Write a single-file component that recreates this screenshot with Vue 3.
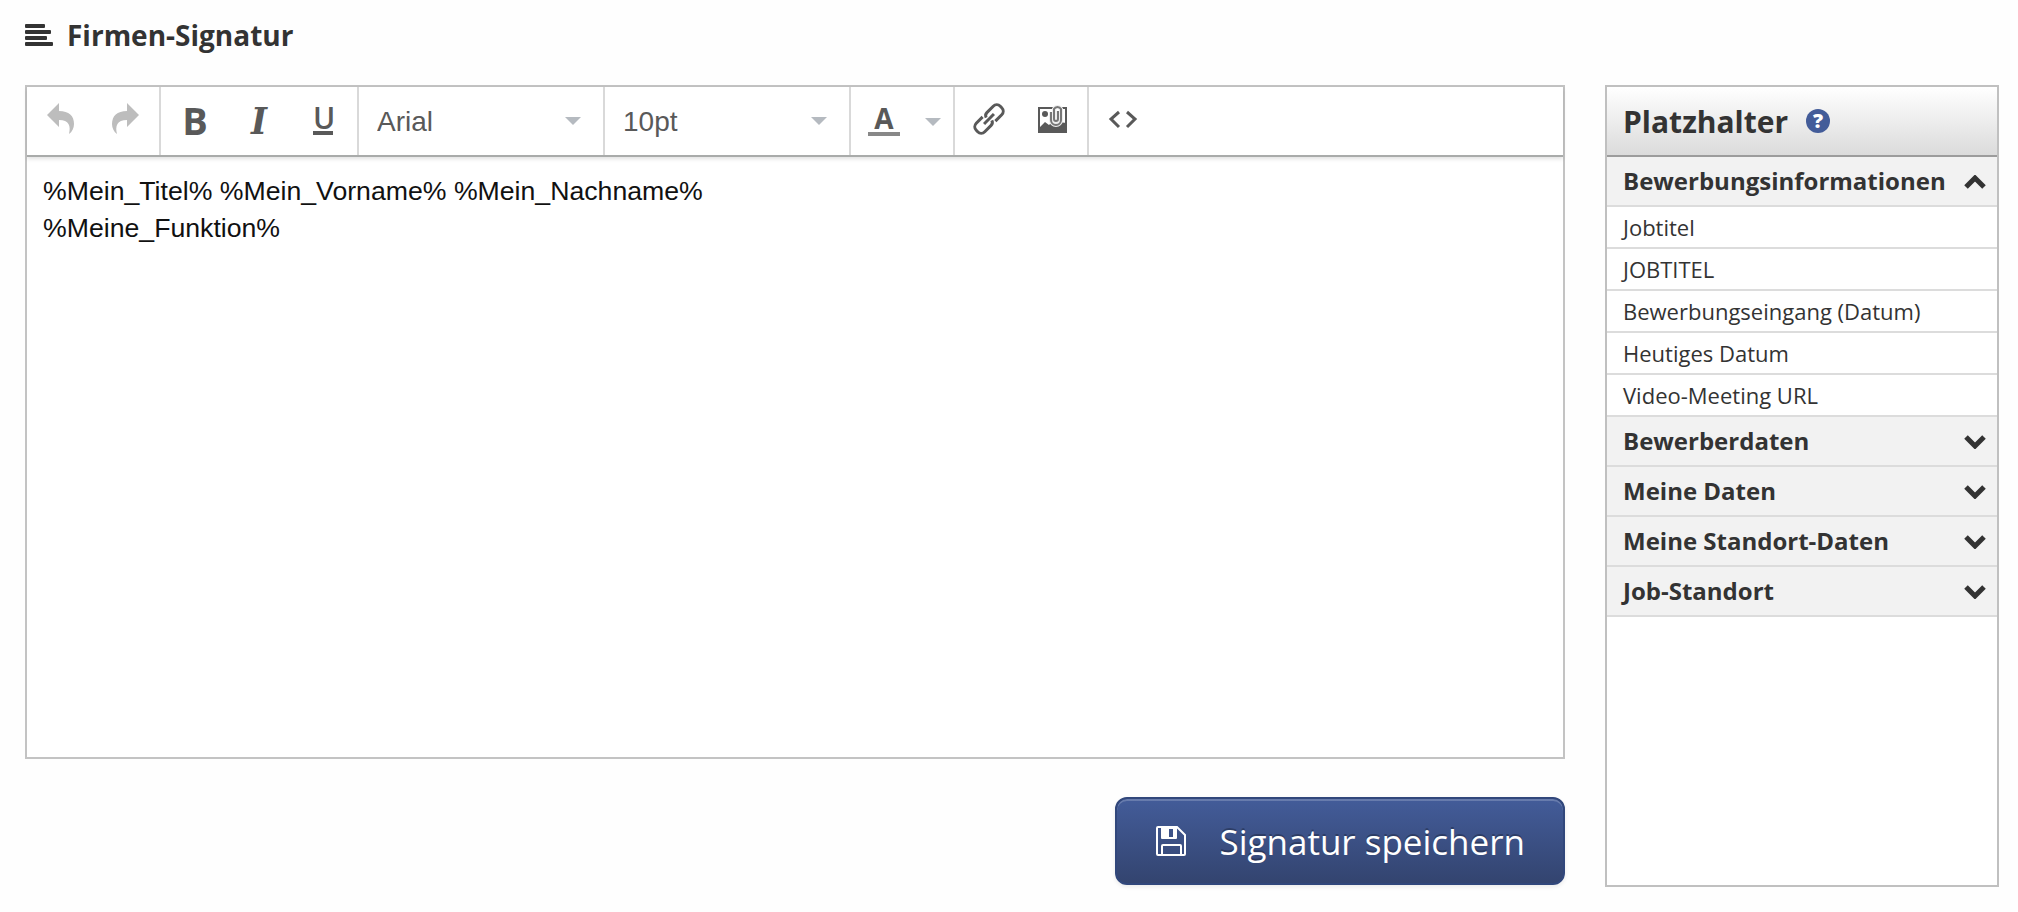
<template>
  <main class="page">
    <h1 class="page-title">
      <svg class="title-icon" viewBox="0 0 28 22" aria-hidden="true">
        <rect x="0" y="0" width="20" height="4" rx="1" />
        <rect x="0" y="6" width="26" height="4" rx="1" />
        <rect x="0" y="12" width="22" height="4" rx="1" />
        <rect x="0" y="18" width="28" height="4" rx="1" />
      </svg>
      <span>Firmen-Signatur</span>
    </h1>

    <div class="content">
      <form class="main" @submit.prevent>
        <div class="editor">
          <div class="toolbar" role="toolbar" aria-label="Formatierung">
            <div class="group">
              <button type="button" class="tool" disabled aria-label="Rückgängig">
                <svg class="icon" viewBox="0 0 36 36">
                  <path d="M4 13 16 1v8c10 0 15 5 15 13 0 4-2 8-5 10 2-8 0-14-10-14v7z" />
                </svg>
              </button>
              <button type="button" class="tool" disabled aria-label="Wiederholen">
                <svg class="icon" viewBox="0 0 36 36">
                  <path d="M32 13 20 1v8C10 9 5 14 5 22c0 4 2 8 5 10-2-8 0-14 10-14v7z" />
                </svg>
              </button>
            </div>
            <div class="group">
              <button type="button" class="tool bold" aria-label="Fett">B</button>
              <button type="button" class="tool italic" aria-label="Kursiv">I</button>
              <button type="button" class="tool underline" aria-label="Unterstrichen">
                <span>U</span>
              </button>
            </div>
            <div class="group select-group">
              <select v-model="font" aria-label="Schriftart">
                <option v-for="f in fonts" :key="f">{{ f }}</option>
              </select>
              <svg class="caret" viewBox="0 0 16 8"><path d="M0 0h16L8 8z" /></svg>
            </div>
            <div class="group select-group">
              <select v-model="size" aria-label="Schriftgröße">
                <option v-for="s in sizes" :key="s">{{ s }}</option>
              </select>
              <svg class="caret" viewBox="0 0 16 8"><path d="M0 0h16L8 8z" /></svg>
            </div>
            <div class="group">
              <button type="button" class="tool color" aria-label="Textfarbe">
                <span>A</span>
              </button>
              <button type="button" class="color-open" aria-label="Textfarbe wählen">
                <svg class="caret" viewBox="0 0 16 8"><path d="M0 0h16L8 8z" /></svg>
              </button>
            </div>
            <div class="group">
              <button type="button" class="tool" aria-label="Link einfügen">
                <svg class="icon line" viewBox="0 0 36 36">
                  <g transform="translate(18 17) rotate(-45)">
                    <path d="M-3-6h-9a5 5 0 0 0-5 5v2a5 5 0 0 0 5 5h9q3 0 4-3" />
                    <path d="M3 6h9a5 5 0 0 0 5-5v-2a5 5 0 0 0-5-5H3q-3 0-4 3" />
                    <path d="M-7 0H7" />
                  </g>
                </svg>
              </button>
              <button type="button" class="tool" aria-label="Bild einfügen">
                <svg class="icon" viewBox="0 0 36 36">
                  <rect class="photo-frame" x="4" y="6" width="27" height="24" />
                  <circle cx="10" cy="12" r="3" />
                  <path d="M4 30v-4l6-6 4 3 4-4 13 2v9z" />
                  <path class="clip-edge" d="M16 10v8a5 5 0 0 0 10 0V7a4 4 0 0 0-7 0v10a2 2 0 0 0 4 0V9" />
                  <path class="clip" d="M16 10v8a5 5 0 0 0 10 0V7a4 4 0 0 0-7 0v10a2 2 0 0 0 4 0V9" />
                </svg>
              </button>
            </div>
            <div class="group">
              <button type="button" class="tool" aria-label="Quelltext">
                <svg class="icon line" viewBox="0 0 36 36">
                  <path d="M14 10l-8 7 8 8M22 10l8 7-8 8" />
                </svg>
              </button>
            </div>
          </div>
          <textarea ref="textRef" v-model="text" class="text" aria-label="Signatur" spellcheck="false"></textarea>
        </div>

        <button type="submit" class="save">
          <svg class="save-icon" viewBox="0 0 32 32" aria-hidden="true">
            <path class="disk" d="M3 2h19l8 8v19a1 1 0 0 1-1 1H3a1 1 0 0 1-1-1V3a1 1 0 0 1 1-1z" />
            <path class="disk" d="M7 30V21a1 1 0 0 1 1-1h17a1 1 0 0 1 1 1v9" />
            <path class="shutter" fill-rule="evenodd" d="M6 2h16v11a1 1 0 0 1-1 1H7a1 1 0 0 1-1-1zM14 4v8h4V4z" />
          </svg>
          <span>Signatur speichern</span>
        </button>
      </form>

      <aside class="sidebar">
        <h2 class="sidebar-title">
          <span>Platzhalter</span>
          <button type="button" class="help" aria-label="Hilfe">?</button>
        </h2>
        <section v-for="section in sections" :key="section.title">
          <button
            type="button"
            class="section-head"
            :aria-expanded="section.open"
            @click="section.open = !section.open"
          >
            <span>{{ section.title }}</span>
            <svg class="chevron" viewBox="0 0 22 14">
              <path v-if="section.open" d="M2 12l9-9 9 9" />
              <path v-else d="M2 2l9 9 9-9" />
            </svg>
          </button>
          <ul v-if="section.open" class="items">
            <li v-for="item in section.items" :key="item.label">
              <button type="button" class="item" @click="insert(item.key)">{{ item.label }}</button>
            </li>
          </ul>
        </section>
      </aside>
    </div>
  </main>
</template>

<script setup>
import { ref, reactive } from 'vue'

const fonts = ['Arial', 'Courier New', 'Georgia', 'Times New Roman', 'Verdana']
const sizes = ['8pt', '10pt', '12pt', '14pt', '18pt']

const font = ref('Arial')
const size = ref('10pt')
const text = ref('%Mein_Titel% %Mein_Vorname% %Mein_Nachname%\n%Meine_Funktion%')
const textRef = ref(null)

const sections = reactive([
  {
    title: 'Bewerbungsinformationen',
    open: true,
    items: [
      { label: 'Jobtitel', key: 'Jobtitel' },
      { label: 'JOBTITEL', key: 'JOBTITEL' },
      { label: 'Bewerbungseingang (Datum)', key: 'Bewerbungseingang' },
      { label: 'Heutiges Datum', key: 'Heutiges_Datum' },
      { label: 'Video-Meeting URL', key: 'Video_Meeting_URL' },
    ],
  },
  { title: 'Bewerberdaten', open: false, items: [] },
  { title: 'Meine Daten', open: false, items: [] },
  { title: 'Meine Standort-Daten', open: false, items: [] },
  { title: 'Job-Standort', open: false, items: [] },
])

// Platzhalter an der Cursorposition einfügen
const insert = (key) => {
  const pos = textRef.value.selectionStart
  text.value = `${text.value.slice(0, pos)}%${key}%${text.value.slice(pos)}`
}
</script>

<style>
body {
  margin: 0;
  background: #fefefe;
}
</style>

<style scoped>
* {
  box-sizing: border-box;
}

button,
select,
textarea {
  margin: 0;
  padding: 0;
  border: 0;
  border-radius: 0;
  background: none;
  color: inherit;
  font: inherit;
}

.page {
  display: flex;
  flex-direction: column;
  min-height: 100vh;
  padding: 15px 19px 25px 25px;
  color: #333;
  font-family: 'Open Sans', sans-serif;
}

.page-title {
  display: flex;
  align-items: center;
  gap: 14px;
  margin: 0 0 30px;
  font-size: 28px;
  line-height: 40px;
}

.title-icon {
  width: 28px;
  height: 22px;
  fill: #333;
}

.content {
  flex: 1;
  display: grid;
  grid-template-columns: minmax(0, 1fr) 394px;
  gap: 40px;
}

.main {
  display: flex;
  flex-direction: column;
  gap: 38px;
  padding-bottom: 2px;
}

.editor {
  flex: 1;
  display: flex;
  flex-direction: column;
  border: 2px solid #c3c3c3;
  background: #fff;
}

.toolbar {
  display: flex;
  height: 70px;
  border-bottom: 2px solid #a9abaa;
  box-shadow: 0 2px 4px rgba(0, 0, 0, 0.12);
  color: #595959;
}

.group {
  display: flex;
  align-items: stretch;
  padding: 0 2px;
  border-right: 2px solid #d9d9d9;
}

.group:last-child {
  border-right: 0;
}

.tool {
  display: flex;
  align-items: center;
  justify-content: center;
  width: 64px;
  padding-bottom: 2px;
}

.tool:disabled {
  color: #bdbdbd;
}

.icon {
  width: 36px;
  height: 36px;
  fill: currentColor;
}

.line {
  fill: none;
  stroke: currentColor;
  stroke-width: 3;
}

.bold {
  font-size: 38px;
  font-weight: 700;
}

.italic {
  font-family: 'DejaVu Serif Condensed', 'DejaVu Serif', serif;
  font-size: 38px;
  font-style: italic;
  font-weight: 700;
}

.underline span {
  width: 20px;
  border-bottom: 4px solid currentColor;
  font-size: 30px;
  font-weight: 600;
  line-height: 26px;
}

.color {
  width: 62px;
}

.color span {
  width: 32px;
  border-bottom: 4px solid #888;
  font-size: 28px;
  font-weight: 700;
  line-height: 28px;
}

.color-open {
  width: 36px;
  padding-bottom: 2px;
}

.caret {
  width: 16px;
  height: 8px;
  fill: #b5bac0;
}

.select-group {
  align-items: center;
  width: 246px;
  padding: 0 22px 0 18px;
}

.select-group select {
  flex: 1;
  align-self: stretch;
  min-width: 0;
  appearance: none;
  font-family: 'Liberation Sans', Arial, sans-serif;
  font-size: 28px;
}

.select-group .caret {
  flex: none;
  pointer-events: none;
}

.photo-frame {
  fill: #fff;
  stroke: currentColor;
  stroke-width: 2;
}

.clip-edge {
  fill: none;
  stroke: #eee;
  stroke-width: 4;
}

.clip {
  fill: none;
  stroke: #777;
  stroke-width: 2;
}

.text {
  flex: 1;
  display: block;
  width: 100%;
  min-height: 200px;
  padding: 16px;
  outline: none;
  resize: none;
  color: #111;
  font-family: 'Liberation Sans', Arial, sans-serif;
  font-size: 20pt;
  line-height: 37px;
}

.save {
  align-self: flex-end;
  display: flex;
  align-items: center;
  gap: 32px;
  height: 88px;
  padding: 0 38px;
  border: 2px solid #31477b;
  border-radius: 12px;
  background: linear-gradient(#435c99, #33446f);
  box-shadow: inset 0 2px 0 rgba(255, 255, 255, 0.2), 0 2px 4px rgba(0, 0, 0, 0.08);
  color: #fff;
  font-size: 35px;
  text-shadow: 0 -2px 0 rgba(0, 0, 0, 0.25);
}

.save-icon {
  width: 32px;
  height: 32px;
}

.disk {
  fill: none;
  stroke: #fff;
  stroke-width: 2;
}

.shutter {
  fill: #fff;
}

.sidebar {
  border: 2px solid #c0c0c0;
  background: #fff;
}

.sidebar-title {
  display: flex;
  align-items: center;
  gap: 18px;
  height: 70px;
  margin: 0;
  padding: 0 16px;
  border-bottom: 2px solid #9c9c9c;
  background: linear-gradient(#fff, #dbdbdb);
  font-size: 30px;
}

.help {
  width: 24px;
  height: 24px;
  border-radius: 50%;
  background: #435c99;
  color: #fff;
  font-size: 20px;
  font-weight: 800;
  line-height: 24px;
}

.section-head {
  display: flex;
  align-items: center;
  justify-content: space-between;
  width: 100%;
  height: 50px;
  padding: 2px 11px 0 16px;
  border-bottom: 2px solid #dcdcdc;
  background: #f2f2f2;
  font-size: 24px;
  font-weight: 700;
}

.section-head span {
  padding-bottom: 4px;
}

.chevron {
  width: 22px;
  height: 14px;
  fill: none;
  stroke: #333;
  stroke-width: 5;
}

.items {
  margin: 0;
  padding: 0;
  list-style: none;
}

.item {
  display: block;
  width: 100%;
  height: 42px;
  padding: 0 16px;
  border-bottom: 2px solid #dcdcdc;
  font-size: 22px;
  text-align: left;
}
</style>
